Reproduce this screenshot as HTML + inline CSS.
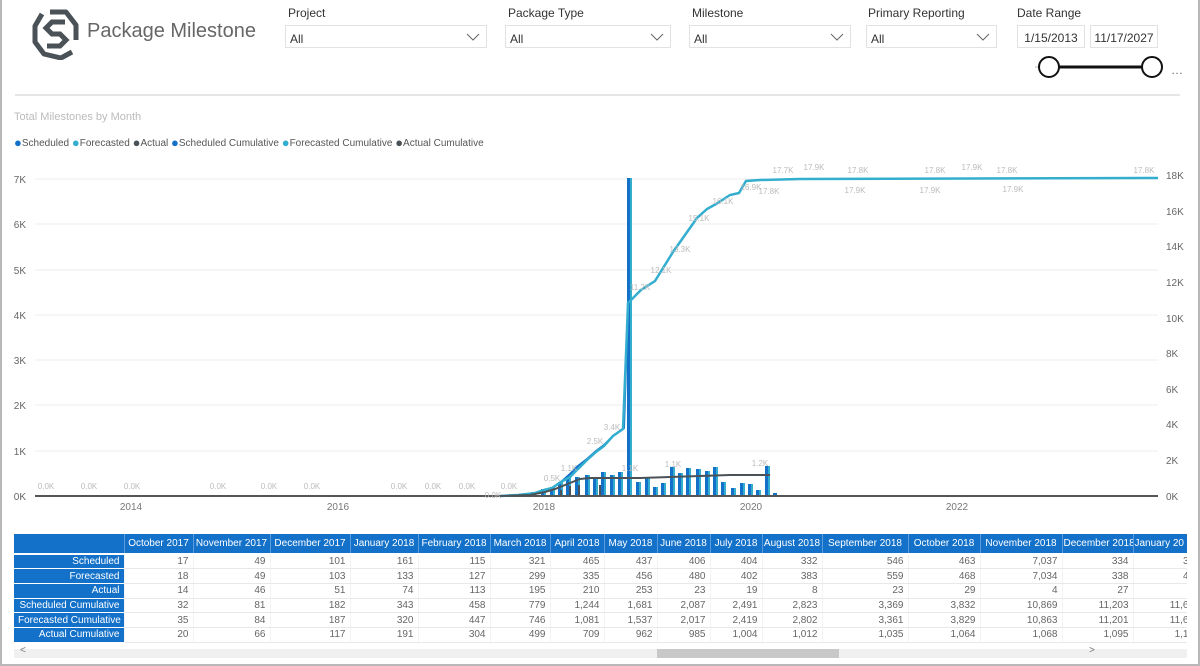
<!DOCTYPE html>
<html><head><meta charset="utf-8"><style>
*{margin:0;padding:0;box-sizing:border-box}
body{width:1200px;height:666px;background:#fff;font-family:"Liberation Sans",sans-serif;position:relative;overflow:hidden;color:#333}
.frame{position:absolute;left:0;top:0;width:1200px;height:666px;border-left:2px solid #b8b8b8;border-right:2px solid #b8b8b8;border-bottom:2px solid #b8b8b8}
.lbl{position:absolute;font-size:12px;color:#333}
.dd{position:absolute;height:23px;border:1px solid #e2e2e2;font-size:12px;color:#333;padding:6px 0 0 4px}
.dd svg{position:absolute;right:6px;top:7px}
.db{position:absolute;height:23px;border:1px solid #e2e2e2;font-size:12px;color:#333;text-align:center;padding-top:5px}
.tw{position:absolute;left:14px;top:534px;width:1173px;height:110px;overflow:hidden}
table{border-collapse:collapse;font-size:10px;color:#666;table-layout:fixed;width:1179px}
td{height:14.7px;padding:0 4px;text-align:right;border-bottom:1px solid #e8e8e8;border-right:1px solid #f3f3f3;white-space:nowrap;overflow:hidden}
tr.h td{background:#1371c9;color:#fff;height:20px;text-align:center;border-right:1px solid #5a9bdb;border-bottom:2px solid #fff;padding:0 1px}
td.r{background:#1371c9;color:#fff;border-bottom:1px solid #fff}
.dot{font-size:13px;vertical-align:-1px}
</style></head><body>
<div class="frame"></div>
<svg style="position:absolute;left:28px;top:8px" width="56" height="52" viewBox="0 0 56 52">
<path d="M14 6 L7 18 L7 34 L16 46 L33 50 L44 44" fill="none" stroke="#4a5257" stroke-width="5" stroke-linejoin="round"/>
<path d="M22 4 L38 4 L48 17 L48 32" fill="none" stroke="#4a5257" stroke-width="5" stroke-linejoin="round"/>
<path d="M37 14 L24 14 L18 20 L24 26 L32 26 L38 32 L32 38 L19 38" fill="none" stroke="#4a5257" stroke-width="5"/>
</svg>
<div style="position:absolute;left:87px;top:20px;font-size:20px;color:#666">Package Milestone</div>
<div class="lbl" style="left:288px;top:6px">Project</div>
<div class="dd" style="left:285px;top:25px;width:202px">All<svg width="14" height="8"><path d="M1 1l6 6 6-6" fill="none" stroke="#666"/></svg></div>
<div class="lbl" style="left:508px;top:6px">Package Type</div>
<div class="dd" style="left:505px;top:25px;width:166px">All<svg width="14" height="8"><path d="M1 1l6 6 6-6" fill="none" stroke="#666"/></svg></div>
<div class="lbl" style="left:692px;top:6px">Milestone</div>
<div class="dd" style="left:689px;top:25px;width:162px">All<svg width="14" height="8"><path d="M1 1l6 6 6-6" fill="none" stroke="#666"/></svg></div>
<div class="lbl" style="left:868px;top:6px">Primary Reporting</div>
<div class="dd" style="left:866px;top:25px;width:131px">All<svg width="14" height="8"><path d="M1 1l6 6 6-6" fill="none" stroke="#666"/></svg></div>
<div class="lbl" style="left:1017px;top:6px">Date Range</div>
<div class="db" style="left:1017px;top:25px;width:68px">1/15/2013</div>
<div class="db" style="left:1090px;top:25px;width:68px">11/17/2027</div>
<svg style="position:absolute;left:1025px;top:52px" width="165" height="30">
<line x1="10" y1="15" x2="135" y2="15" stroke="#ddd" stroke-width="2"/>
<line x1="24" y1="15" x2="127" y2="15" stroke="#111" stroke-width="3"/>
<circle cx="24" cy="15" r="10" fill="#fff" stroke="#111" stroke-width="2"/>
<circle cx="127" cy="15" r="10" fill="#fff" stroke="#111" stroke-width="2"/>
<text x="146" y="22" font-size="12" fill="#666" font-family="Liberation Sans">…</text>
</svg>
<div style="position:absolute;left:15px;top:94px;width:1165px;height:2px;background:#e6e6e6"></div>
<div style="position:absolute;left:14px;top:111px;font-size:11px;color:#bbb">Total Milestones by Month</div>
<div style="position:absolute;left:14px;top:135px;font-size:10px;color:#555;white-space:nowrap">
<span class="dot" style="color:#1371c9">●</span>Scheduled <span class="dot" style="color:#33aecf">●</span>Forecasted <span class="dot" style="color:#4a5257">●</span>Actual <span class="dot" style="color:#1371c9">●</span>Scheduled Cumulative <span class="dot" style="color:#33aecf">●</span>Forecasted Cumulative <span class="dot" style="color:#4a5257">●</span>Actual Cumulative</div>
<svg style="position:absolute;left:0;top:160px" width="1200" height="360" font-family="Liberation Sans" font-size="10">
<g stroke="#eee" stroke-width="1">
<line x1="35" x2="1158" y1="19" y2="19"/><line x1="35" x2="1158" y1="64" y2="64"/><line x1="35" x2="1158" y1="110" y2="110"/><line x1="35" x2="1158" y1="155" y2="155"/><line x1="35" x2="1158" y1="200" y2="200"/><line x1="35" x2="1158" y1="245" y2="245"/><line x1="35" x2="1158" y1="291" y2="291"/>
</g>
<g fill="#666" text-anchor="end"><text x="26" y="23">7K</text><text x="26" y="68">6K</text><text x="26" y="114">5K</text><text x="26" y="159">4K</text><text x="26" y="204">3K</text><text x="26" y="249">2K</text><text x="26" y="295">1K</text><text x="26" y="340">0K</text></g>
<g fill="#666"><text x="1166" y="19">18K</text><text x="1166" y="55">16K</text><text x="1166" y="90">14K</text><text x="1166" y="126">12K</text><text x="1166" y="162">10K</text><text x="1166" y="197">8K</text><text x="1166" y="233">6K</text><text x="1166" y="268">4K</text><text x="1166" y="304">2K</text><text x="1166" y="340">0K</text></g>
<g fill="#777" text-anchor="middle"><text x="131" y="350">2014</text><text x="338" y="350">2016</text><text x="544" y="350">2018</text><text x="751" y="350">2020</text><text x="957" y="350">2022</text></g>
<g id="bars">
<rect x="531" y="332" width="3" height="4" fill="#1371c9"/><rect x="534" y="332" width="2" height="4" fill="#33aecf"/>
<rect x="541" y="329" width="3" height="7" fill="#1371c9"/><rect x="544" y="329" width="2" height="7" fill="#33aecf"/>
<rect x="550" y="327" width="3" height="9" fill="#1371c9"/><rect x="553" y="327" width="2" height="9" fill="#33aecf"/>
<rect x="558" y="322" width="3" height="14" fill="#1371c9"/><rect x="561" y="322" width="2" height="14" fill="#33aecf"/>
<rect x="566" y="318" width="3" height="18" fill="#1371c9"/><rect x="569" y="318" width="2" height="18" fill="#33aecf"/>
<rect x="575" y="317" width="3" height="19" fill="#1371c9"/><rect x="578" y="317" width="2" height="19" fill="#33aecf"/>
<rect x="585" y="315" width="3" height="21" fill="#1371c9"/><rect x="588" y="315" width="2" height="21" fill="#33aecf"/>
<rect x="593" y="317" width="3" height="19" fill="#1371c9"/><rect x="596" y="317" width="2" height="19" fill="#33aecf"/>
<rect x="601" y="312" width="3" height="24" fill="#1371c9"/><rect x="604" y="312" width="2" height="24" fill="#33aecf"/>
<rect x="610" y="315" width="3" height="21" fill="#1371c9"/><rect x="613" y="315" width="2" height="21" fill="#33aecf"/>
<rect x="618" y="312" width="3" height="24" fill="#1371c9"/><rect x="621" y="312" width="2" height="24" fill="#33aecf"/>
<rect x="627" y="18" width="3" height="318" fill="#1371c9"/><rect x="630" y="18" width="2" height="318" fill="#33aecf"/>
<rect x="636" y="322" width="3" height="14" fill="#1371c9"/><rect x="639" y="322" width="2" height="14" fill="#33aecf"/>
<rect x="645" y="318" width="3" height="18" fill="#1371c9"/><rect x="648" y="318" width="2" height="18" fill="#33aecf"/>
<rect x="653" y="327" width="3" height="9" fill="#1371c9"/><rect x="656" y="327" width="2" height="9" fill="#33aecf"/>
<rect x="661" y="323" width="3" height="13" fill="#1371c9"/><rect x="664" y="323" width="2" height="13" fill="#33aecf"/>
<rect x="670" y="307" width="3" height="29" fill="#1371c9"/><rect x="673" y="307" width="2" height="29" fill="#33aecf"/>
<rect x="678" y="313" width="3" height="23" fill="#1371c9"/><rect x="681" y="313" width="2" height="23" fill="#33aecf"/>
<rect x="686" y="308" width="3" height="28" fill="#1371c9"/><rect x="689" y="308" width="2" height="28" fill="#33aecf"/>
<rect x="696" y="309" width="3" height="27" fill="#1371c9"/><rect x="699" y="309" width="2" height="27" fill="#33aecf"/>
<rect x="705" y="311" width="3" height="25" fill="#1371c9"/><rect x="708" y="311" width="2" height="25" fill="#33aecf"/>
<rect x="713" y="307" width="3" height="29" fill="#1371c9"/><rect x="716" y="307" width="2" height="29" fill="#33aecf"/>
<rect x="721" y="322" width="3" height="14" fill="#1371c9"/><rect x="724" y="322" width="2" height="14" fill="#33aecf"/>
<rect x="731" y="328" width="3" height="8" fill="#1371c9"/><rect x="734" y="328" width="2" height="8" fill="#33aecf"/>
<rect x="740" y="323" width="3" height="13" fill="#1371c9"/><rect x="743" y="323" width="2" height="13" fill="#33aecf"/>
<rect x="748" y="324" width="3" height="12" fill="#1371c9"/><rect x="751" y="324" width="2" height="12" fill="#33aecf"/>
<rect x="756" y="330" width="3" height="6" fill="#1371c9"/><rect x="759" y="330" width="2" height="6" fill="#33aecf"/>
<rect x="765" y="306" width="3" height="30" fill="#1371c9"/><rect x="768" y="306" width="2" height="30" fill="#33aecf"/>
<rect x="773" y="333" width="4" height="3" fill="#1371c9"/>
<rect x="782" y="335" width="4" height="1" fill="#1371c9"/><rect x="791" y="335" width="4" height="1" fill="#1371c9"/><rect x="799" y="335" width="4" height="1" fill="#1371c9"/><rect x="808" y="335" width="4" height="1" fill="#1371c9"/><rect x="825" y="335" width="4" height="1" fill="#1371c9"/><rect x="833" y="335" width="4" height="1" fill="#1371c9"/><rect x="842" y="335" width="4" height="1" fill="#1371c9"/><rect x="928" y="335" width="4" height="1" fill="#1371c9"/><rect x="1040" y="335" width="4" height="1" fill="#1371c9"/><rect x="1048" y="335" width="4" height="1" fill="#1371c9"/><rect x="1056" y="335" width="4" height="1" fill="#1371c9"/><rect x="1150" y="335" width="4" height="1" fill="#1371c9"/>
<rect x="560" y="330" width="2" height="6" fill="#4a5257"/><rect x="569" y="326" width="2" height="10" fill="#4a5257"/><rect x="578" y="325" width="2" height="11" fill="#4a5257"/><rect x="599" y="325" width="2" height="11" fill="#4a5257"/>
</g>
<line x1="35" y1="336" x2="1158" y2="336" stroke="#555" stroke-width="2"/>
<polyline fill="none" stroke="#1371c9" stroke-width="2" points="500,336 518,335 527,334 535,333 544,330 552,328 561,322 570,314 578,306 587,299 596,291 604,285 613,276 624,268 628,144"/>
<polyline fill="none" stroke="#33aecf" stroke-width="2.5" points="500,336 518,335 527,334 535,333 544,330 552,328 561,322 570,317 578,309 587,300 596,292 604,286 613,276 623,269 627,170 628,143 641,130 655,121 673,92 697,58 707,49 716,44 730,35 739,33 746,21 760,20 800,19 1158,18"/>
<polyline fill="none" stroke="#4a5257" stroke-width="2" points="500,336 530,335 545,332 555,329 570,323 580,319 590,318 640,318 700,316 730,315 770,315"/>
<g fill="#bbb" font-size="8" text-anchor="middle">
<text x="46" y="329">0.0K</text><text x="89" y="329">0.0K</text><text x="132" y="329">0.0K</text><text x="218" y="329">0.0K</text><text x="269" y="329">0.0K</text><text x="312" y="329">0.0K</text><text x="399" y="329">0.0K</text><text x="433" y="329">0.0K</text><text x="467" y="329">0.0K</text><text x="493" y="338">0.0K</text><text x="509" y="329">0.0K</text>
<text x="552" y="321">0.5K</text><text x="569" y="311">1.1K</text><text x="595" y="284">2.5K</text><text x="612" y="270">3.4K</text><text x="630" y="311">1.1K</text><text x="673" y="307">1.1K</text><text x="760" y="306">1.2K</text>
<text x="640" y="130">11.2K</text><text x="661" y="113">12.1K</text><text x="680" y="92">13.3K</text><text x="699" y="61">15.1K</text><text x="723" y="44">16.1K</text><text x="751" y="30">16.9K</text>
<text x="783" y="13">17.7K</text><text x="814" y="10">17.9K</text><text x="858" y="13">17.8K</text><text x="935" y="13">17.8K</text><text x="972" y="10">17.9K</text><text x="1007" y="13">17.8K</text><text x="1144" y="13">17.8K</text>
<text x="769" y="34">17.8K</text><text x="855" y="33">17.9K</text><text x="930" y="33">17.9K</text><text x="1013" y="32">17.9K</text>
</g>
</svg>
<div class="tw">
<table>
<colgroup><col style="width:110px"><col style="width:69px"><col style="width:77px"><col style="width:80px"><col style="width:68px"><col style="width:72px"><col style="width:60px"><col style="width:54px"><col style="width:53px"><col style="width:53px"><col style="width:52px"><col style="width:60px"><col style="width:86px"><col style="width:72px"><col style="width:82px"><col style="width:71px"><col style="width:60px"></colgroup>
<tr class="h"><td></td><td>October 2017</td><td>November 2017</td><td>December 2017</td><td>January 2018</td><td>February 2018</td><td>March 2018</td><td>April 2018</td><td>May 2018</td><td>June 2018</td><td>July 2018</td><td>August 2018</td><td>September 2018</td><td>October 2018</td><td>November 2018</td><td>December 2018</td><td style="text-align:left">January 20</td></tr>
<tr><td class="r">Scheduled</td><td>17</td><td>49</td><td>101</td><td>161</td><td>115</td><td>321</td><td>465</td><td>437</td><td>406</td><td>404</td><td>332</td><td>546</td><td>463</td><td>7,037</td><td>334</td><td>3</td></tr>
<tr><td class="r">Forecasted</td><td>18</td><td>49</td><td>103</td><td>133</td><td>127</td><td>299</td><td>335</td><td>456</td><td>480</td><td>402</td><td>383</td><td>559</td><td>468</td><td>7,034</td><td>338</td><td>4</td></tr>
<tr><td class="r">Actual</td><td>14</td><td>46</td><td>51</td><td>74</td><td>113</td><td>195</td><td>210</td><td>253</td><td>23</td><td>19</td><td>8</td><td>23</td><td>29</td><td>4</td><td>27</td><td></td></tr>
<tr><td class="r">Scheduled Cumulative</td><td>32</td><td>81</td><td>182</td><td>343</td><td>458</td><td>779</td><td>1,244</td><td>1,681</td><td>2,087</td><td>2,491</td><td>2,823</td><td>3,369</td><td>3,832</td><td>10,869</td><td>11,203</td><td>11,6</td></tr>
<tr><td class="r">Forecasted Cumulative</td><td>35</td><td>84</td><td>187</td><td>320</td><td>447</td><td>746</td><td>1,081</td><td>1,537</td><td>2,017</td><td>2,419</td><td>2,802</td><td>3,361</td><td>3,829</td><td>10,863</td><td>11,201</td><td>11,6</td></tr>
<tr><td class="r">Actual Cumulative</td><td>20</td><td>66</td><td>117</td><td>191</td><td>304</td><td>499</td><td>709</td><td>962</td><td>985</td><td>1,004</td><td>1,012</td><td>1,035</td><td>1,064</td><td>1,068</td><td>1,095</td><td>1,1</td></tr>
</table>
</div>
<div style="position:absolute;left:14px;top:649px;width:1173px;height:9px;background:#f0f0f0"></div>
<div style="position:absolute;left:657px;top:649px;width:182px;height:9px;background:#c8c8c8"></div>
<div style="position:absolute;left:20px;top:645px;font-size:10px;color:#777">&lt;</div>
<div style="position:absolute;left:1089px;top:645px;font-size:10px;color:#777">&gt;</div>
</body></html>
